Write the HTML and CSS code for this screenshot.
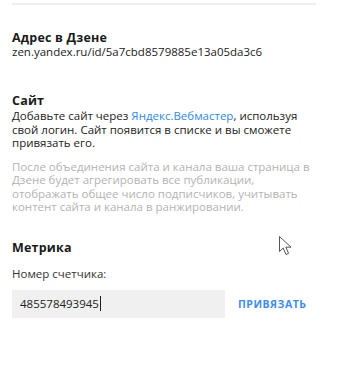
FILE: index.html
```html
<!DOCTYPE html>
<html lang="ru">
<head>
<meta charset="utf-8">
<link rel="stylesheet" href="styles.css">
</head>
<body>
<div class="panel">
  <div class="rule"></div>
  <section class="sec sec-address">
    <h3 class="title">Адрес в Дзене</h3>
    <p class="text">zen.yandex.ru/id/5a7cbd8579885e13a05da3c6</p>
  </section>
  <section class="sec sec-site">
    <h3 class="title">Сайт</h3>
    <p class="text">Добавьте сайт через <a class="link" href="#">Яндекс.Вебмастер</a>, используя свой логин. Сайт появится в списке и вы сможете привязать его.</p>
    <p class="text muted">После объединения сайта и канала ваша страница в Дзене будет агрегировать все публикации, отображать общее число подписчиков, учитывать контент сайта и канала в ранжировании.</p>
  </section>
  <section class="sec sec-metrika">
    <h3 class="title">Метрика</h3>
    <p class="text label">Номер счетчика:</p>
    <div class="row">
      <div class="input"><span class="value">485578493945</span><span class="caret"></span></div>
      <button class="bind">Привязать</button>
    </div>
  </section>
  <svg class="cursor" width="14" height="20" viewBox="0 0 14 20"><path d="M0.5 0.5 L0.5 15.5 L4.2 12 L7 18.5 L9.6 17.4 L6.9 11.2 L12 11.2 Z" fill="#fff" stroke="#555" stroke-width="1" stroke-linejoin="round"/></svg>
</div>
</body>
</html>
```
FILE: styles.css
```css
* { box-sizing: border-box; }
html, body { margin: 0; padding: 0; background: #fff; }
body {
  font-family: "Open Sans", "Noto Sans", sans-serif;
  font-size: 11.5px;
  color: #222;
}
.panel {
  position: relative;
  width: 339px;
  height: 370px;
  padding: 3px 0 0 12px;
}
.rule {
  width: 304px;
  height: 2px;
  background: #efefef;
}
.sec { margin: 0; }
.sec-address { padding-top: 25px; }
.sec-site { padding-top: 35px; }
.sec-metrika { padding-top: 27px; }
.title {
  margin: 0;
  font-size: 12.5px;
  font-weight: 700;
  line-height: 15px;
  letter-spacing: 0.2px;
  color: #1a1a1a;
}
.text {
  margin: 0;
  font-size: 11.5px;
  line-height: 13.3px;
  width: 300px;
}
.sec-site .text:first-of-type { margin-top: 1px; }
.link { color: #2d8af0; text-decoration: none; }
.muted { color: #b3b3b3; margin-top: 11px; }
.label { margin-top: 12px; color: #333; }
.row {
  display: flex;
  align-items: center;
  margin-top: 9px;
}
.input {
  width: 213px;
  height: 28px;
  background: #f0f0f0;
  display: flex;
  align-items: center;
  padding-left: 8px;
  font-size: 11.5px;
  color: #222;
}
.caret {
  display: inline-block;
  width: 1px;
  height: 15px;
  background: #222;
  margin-left: 1px;
}
.bind {
  margin-left: 13px;
  padding: 0;
  border: 0;
  background: none;
  font-family: inherit;
  font-size: 10.5px;
  font-weight: 700;
  letter-spacing: 0.5px;
  text-transform: uppercase;
  color: #3d8cf2;
}
.cursor {
  position: absolute;
  left: 279px;
  top: 236px;
}
```
